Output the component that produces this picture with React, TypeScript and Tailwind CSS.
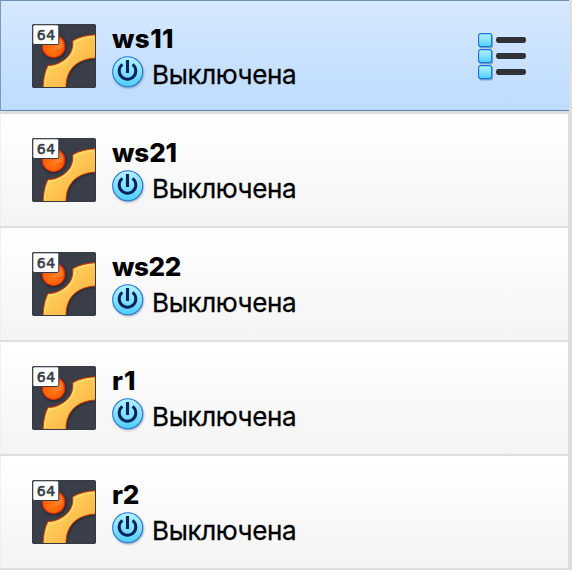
import React from "react";

const machines = [
  { name: "ws11", tracking: "tracking-[0.4px]" },
  { name: "ws21", tracking: "tracking-[-0.1px]" },
  { name: "ws22", tracking: "tracking-[-0.4px]" },
  { name: "r1", tracking: "tracking-[1px]" },
  { name: "r2", tracking: "tracking-[-0.2px]" },
];

function Gradients() {
  return (
    <svg width="0" height="0" className="absolute" aria-hidden="true">
      <defs>
        <linearGradient id="band" x1="0" y1="0" x2="1" y2="1">
          <stop offset="0" stopColor="#ffe070" />
          <stop offset="0.5" stopColor="#ffc552" />
          <stop offset="1" stopColor="#ffa53a" />
        </linearGradient>
        <radialGradient id="ball" cx="0.48" cy="0.62" r="0.6">
          <stop offset="0" stopColor="#ff7a18" />
          <stop offset="0.55" stopColor="#ff6409" />
          <stop offset="1" stopColor="#f04c08" />
        </radialGradient>
        <linearGradient id="aqua" x1="0" y1="0" x2="0" y2="1">
          <stop offset="0" stopColor="#b0f2ff" />
          <stop offset="0.5" stopColor="#86e1ff" />
          <stop offset="1" stopColor="#4bceff" />
        </linearGradient>
        <filter id="soft" x="-20%" y="-20%" width="150%" height="150%">
          <feGaussianBlur stdDeviation="1.3" />
        </filter>
        <clipPath id="tile">
          <rect width="64" height="64" rx="2" />
        </clipPath>
      </defs>
    </svg>
  );
}

const bandPath =
  "M11 64C11.5 54 13 47 16 41.5Q23 41.5 27.5 38.7C37 34 41.5 27 40.7 16.7Q50 11.2 64 10.7V34C45 35 34 45 34 64Z";

function OsIcon() {
  return (
    <svg width="64" height="64" viewBox="0 0 64 64" className="shrink-0">
      <g clipPath="url(#tile)">
        <rect width="64" height="64" fill="#393e49" />
        <path d={bandPath} fill="#15171d" opacity="0.65" transform="translate(1 1)" filter="url(#soft)" />
        <circle cx="22" cy="23" r="12" fill="#15171d" opacity="0.7" filter="url(#soft)" />
        <path d={bandPath} fill="url(#band)" stroke="#ce3500" strokeWidth="1" />
        <path d="M13 61C13.5 53 15 48 17.5 43.5Q25 43 30 39.5C39 34 43 27 42.7 18Q52 13.4 62 12.7" fill="none" stroke="#ffe57b" strokeWidth="1.2" opacity="0.8" />
        <circle cx="21.6" cy="22.2" r="11.3" fill="url(#ball)" stroke="#df2900" strokeWidth="1.1" />
        <path d="M28 14a10 10 0 0 1 3 9q-4 3-9 2z" fill="#ff984f" opacity="0.45" />
        <path d="M63.5 10V62q0 1.5-1.5 1.5H2Q.5 63.5.5 62V2Q.5.5 2 .5H62q1.5 0 1.5 1.5V10" fill="none" stroke="#343943" />
      </g>
      <rect x="0.8" y="0.8" width="26" height="19.7" rx="1.7" fill="#fff" stroke="#343943" />
      <text x="4.8" y="16.3" textLength="18.4" fill="#383d47" stroke="#383d47" strokeWidth="0.6" fontFamily="'DejaVu Sans', sans-serif" fontSize="14">64</text>
    </svg>
  );
}

function PowerIcon() {
  return (
    <svg width="34" height="34" viewBox="0 0 34 34" className="-mr-0.5 shrink-0">
      <circle cx="16.5" cy="17" r="15.2" fill="#35506b" opacity="0.5" filter="url(#soft)" />
      <circle cx="15.7" cy="15.7" r="15" fill="url(#aqua)" stroke="#2875d2" strokeWidth="1.1" />
      <path d="M10.4 8.4a8.3 8.3 0 1 0 10.2 0" fill="none" stroke="#07245c" strokeWidth="3" />
      <path d="M15.5 4v13" fill="none" stroke="#07245c" strokeWidth="3.1" />
    </svg>
  );
}

function ListIcon() {
  return (
    <svg width="50" height="50" viewBox="0 0 50 50" className="shrink-0">
      {[0, 16, 32].map((y) => (
        <g key={y} transform={`translate(0 ${y})`}>
          <rect x="1.3" y="1.6" width="13.8" height="13.8" rx="2" fill="#4b6480" opacity="0.45" />
          <rect x="0.6" y="0.6" width="13" height="13" rx="2" fill="url(#aqua)" stroke="#1876dc" strokeWidth="1.1" />
          <rect x="18" y="4" width="30" height="6" rx="2.4" fill="#303235" />
        </g>
      ))}
    </svg>
  );
}

function MachineRow({ name, tracking, selected }: { name: string; tracking: string; selected: boolean }) {
  return (
    <div className="h-[114px] w-full">
      <div
        className={
          selected
            ? "flex h-[111px] w-[569px] items-start border-y border-l border-t-[#718fb6] border-b-[#6284b2] border-l-[#8099b9] bg-linear-to-b from-[#d6e8ff] to-[#bddcff] pt-[23px] pl-[31px]"
            : "flex h-28 w-[568px] items-start border-l border-[#f0f0f0] bg-linear-to-b from-white to-[#f4f4f4] pt-6 pl-[31px]"
        }
      >
        <OsIcon />
        <div className="ml-4 flex flex-col">
          <div className={`h-8 pt-px text-[26px] leading-[28px] font-extrabold ${tracking}`}>{name}</div>
          <div className="flex items-start">
            <PowerIcon />
            <span className="ml-2 pt-[3px] text-[26px] leading-[31px] tracking-[-0.35px] whitespace-nowrap [-webkit-text-stroke:0.3px_black]">
              Выключена
            </span>
          </div>
        </div>
        {selected && (
          <div className="mr-[41px] ml-auto pt-[9px]">
            <ListIcon />
          </div>
        )}
      </div>
    </div>
  );
}

export default function App() {
  return (
    <main className="h-[570px] w-[572px] overflow-hidden bg-[#dedede] font-['Inter',sans-serif] text-black">
      <Gradients />
      {machines.map((machine, i) => (
        <MachineRow key={machine.name} name={machine.name} tracking={machine.tracking} selected={i === 0} />
      ))}
    </main>
  );
}
